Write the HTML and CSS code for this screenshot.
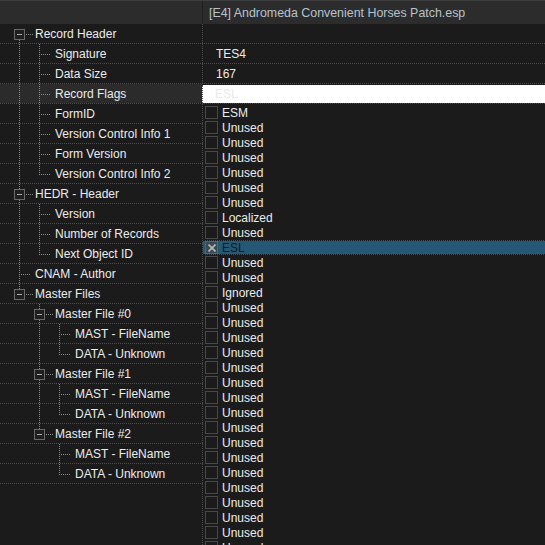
FILE: index.html
```html
<!DOCTYPE html>
<html>
<head>
<meta charset="utf-8">
<link rel="stylesheet" href="styles.css">
</head>
<body>
<div class="app">
  <div class="header">
    <div class="hcell hname"></div>
    <div class="hcell hval">[E4] Andromeda Convenient Horses Patch.esp</div>
  </div>
  <div class="rows">
    <div class="row"><div class="name"><span class="c box-first"><i class="box"></i></span><span class="t">Record Header</span></div><div class="val"></div></div>
    <div class="row"><div class="name"><span class="g pipe"></span><span class="c tee"></span><span class="t">Signature</span></div><div class="val">TES4</div></div>
    <div class="row"><div class="name"><span class="g pipe"></span><span class="c tee"></span><span class="t">Data Size</span></div><div class="val">167</div></div>
    <div class="row sel"><div class="name"><span class="g pipe"></span><span class="c tee"></span><span class="t">Record Flags</span></div><div class="val edit">ESL</div></div>
    <div class="row"><div class="name"><span class="g pipe"></span><span class="c tee"></span><span class="t">FormID</span></div><div class="val"></div></div>
    <div class="row"><div class="name"><span class="g pipe"></span><span class="c tee"></span><span class="t">Version Control Info 1</span></div><div class="val"></div></div>
    <div class="row"><div class="name"><span class="g pipe"></span><span class="c tee"></span><span class="t">Form Version</span></div><div class="val"></div></div>
    <div class="row"><div class="name"><span class="g pipe"></span><span class="c elbow"></span><span class="t">Version Control Info 2</span></div><div class="val"></div></div>
    <div class="row"><div class="name"><span class="c box-mid"><i class="box"></i></span><span class="t">HEDR - Header</span></div><div class="val"></div></div>
    <div class="row"><div class="name"><span class="g pipe"></span><span class="c tee"></span><span class="t">Version</span></div><div class="val"></div></div>
    <div class="row"><div class="name"><span class="g pipe"></span><span class="c tee"></span><span class="t">Number of Records</span></div><div class="val"></div></div>
    <div class="row"><div class="name"><span class="g pipe"></span><span class="c elbow"></span><span class="t">Next Object ID</span></div><div class="val"></div></div>
    <div class="row"><div class="name"><span class="c tee"></span><span class="t">CNAM - Author</span></div><div class="val"></div></div>
    <div class="row"><div class="name"><span class="c box-last"><i class="box"></i></span><span class="t">Master Files</span></div><div class="val"></div></div>
    <div class="row"><div class="name"><span class="g"></span><span class="c box-mid"><i class="box"></i></span><span class="t">Master File #0</span></div><div class="val"></div></div>
    <div class="row"><div class="name"><span class="g"></span><span class="g pipe"></span><span class="c tee"></span><span class="t">MAST - FileName</span></div><div class="val"></div></div>
    <div class="row"><div class="name"><span class="g"></span><span class="g pipe"></span><span class="c elbow"></span><span class="t">DATA - Unknown</span></div><div class="val"></div></div>
    <div class="row"><div class="name"><span class="g"></span><span class="c box-mid"><i class="box"></i></span><span class="t">Master File #1</span></div><div class="val"></div></div>
    <div class="row"><div class="name"><span class="g"></span><span class="g pipe"></span><span class="c tee"></span><span class="t">MAST - FileName</span></div><div class="val"></div></div>
    <div class="row"><div class="name"><span class="g"></span><span class="g pipe"></span><span class="c elbow"></span><span class="t">DATA - Unknown</span></div><div class="val"></div></div>
    <div class="row"><div class="name"><span class="g"></span><span class="c box-last"><i class="box"></i></span><span class="t">Master File #2</span></div><div class="val"></div></div>
    <div class="row"><div class="name"><span class="g"></span><span class="g"></span><span class="c tee"></span><span class="t">MAST - FileName</span></div><div class="val"></div></div>
    <div class="row"><div class="name"><span class="g"></span><span class="g"></span><span class="c elbow"></span><span class="t">DATA - Unknown</span></div><div class="val"></div></div>
    <div class="filler"><div class="fname"></div><div class="fval"></div></div>
  </div>

  <ul class="dropdown">
    <li><span class="cb"></span>ESM</li>
    <li><span class="cb"></span>Unused</li>
    <li><span class="cb"></span>Unused</li>
    <li><span class="cb"></span>Unused</li>
    <li><span class="cb"></span>Unused</li>
    <li><span class="cb"></span>Unused</li>
    <li><span class="cb"></span>Unused</li>
    <li><span class="cb"></span>Localized</li>
    <li><span class="cb"></span>Unused</li>
    <li class="on"><span class="cb"><svg width="8" height="8" viewBox="0 0 8 8"><path d="M0.5 0.5L7.5 7.5M7.5 0.5L0.5 7.5" stroke="#b8b8b8" stroke-width="1.6"/></svg></span>ESL</li>
    <li><span class="cb"></span>Unused</li>
    <li><span class="cb"></span>Unused</li>
    <li><span class="cb"></span>Ignored</li>
    <li><span class="cb"></span>Unused</li>
    <li><span class="cb"></span>Unused</li>
    <li><span class="cb"></span>Unused</li>
    <li><span class="cb"></span>Unused</li>
    <li><span class="cb"></span>Unused</li>
    <li><span class="cb"></span>Unused</li>
    <li><span class="cb"></span>Unused</li>
    <li><span class="cb"></span>Unused</li>
    <li><span class="cb"></span>Unused</li>
    <li><span class="cb"></span>Unused</li>
    <li><span class="cb"></span>Unused</li>
    <li><span class="cb"></span>Unused</li>
    <li><span class="cb"></span>Unused</li>
    <li><span class="cb"></span>Unused</li>
    <li><span class="cb"></span>Unused</li>
    <li><span class="cb"></span>Unused</li>
    <li><span class="cb"></span>Unused</li>
    <li><span class="cb"></span>Unused</li>
    <li><span class="cb"></span>Unused</li>
  </ul>
</div>
</body>
</html>
```

FILE: styles.css
```css
html, body {
  margin: 0;
  padding: 0;
  background: #1b1b1b;
  overflow: hidden;
}
body {
  font-family: "Liberation Sans", Arial, sans-serif;
  font-size: 12px;
  color: #ececec;
}
.app {
  position: relative;
  width: 545px;
  height: 545px;
  display: flex;
  flex-direction: column;
  overflow: hidden;
}
.header {
  display: flex;
  height: 23px;
  background: #2c2c2c;
  border-top: 1px solid #3e3e3e;
  flex: none;
}
.hcell {
  display: flex;
  align-items: center;
}
.hname {
  width: 202px;
  border-right: 1px solid #1f1f1f;
}
.hval {
  flex: 1;
  padding-left: 6px;
  font-size: 12.4px;
  color: #b7c3cc;
}
.rows {
  flex: 1;
  display: flex;
  flex-direction: column;
}
.row {
  display: flex;
  height: 19px;
  border-bottom: 1px dotted #4c4c4c;
}
.name {
  width: 193px;
  padding-left: 9px;
  display: flex;
  align-items: center;
  white-space: nowrap;
}
.row.sel .name {
  background: #2b2b2b;
}
.val {
  flex: 1;
  border-left: 1px dotted #4c4c4c;
  padding-left: 13px;
  padding-top: 1px;
  display: flex;
  align-items: center;
}
.val.edit {
  background: #ffffff;
  color: #e9e9e9;
  margin-top: 1px;
  padding-top: 0;
  padding-left: 12px;
}
.g {
  width: 20px;
  height: 19px;
  flex: none;
}
.c {
  width: 26px;
  height: 19px;
  flex: none;
  display: flex;
  align-items: flex-start;
}
.t {
  line-height: 19px;
  padding-top: 1px;
}
/* dotted tree lines via gradients */
.g.pipe {
  background-image: repeating-linear-gradient(to bottom, #8a8a8a 0 1px, transparent 1px 2px);
  background-size: 1px 19px;
  background-position: 10px 0;
  background-repeat: no-repeat;
}
.c.tee {
  background-image:
    repeating-linear-gradient(to bottom, #8a8a8a 0 1px, transparent 1px 2px),
    repeating-linear-gradient(to right, #8a8a8a 0 1px, transparent 1px 2px);
  background-size: 1px 19px, 12px 1px;
  background-position: 10px 0, 10px 10px;
  background-repeat: no-repeat;
}
.c.elbow {
  background-image:
    repeating-linear-gradient(to bottom, #8a8a8a 0 1px, transparent 1px 2px),
    repeating-linear-gradient(to right, #8a8a8a 0 1px, transparent 1px 2px);
  background-size: 1px 10px, 12px 1px;
  background-position: 10px 0, 10px 10px;
  background-repeat: no-repeat;
}
.c.box-first,
.c.box-mid,
.c.box-last {
  background-repeat: no-repeat;
}
.c.box-first {
  background-image:
    repeating-linear-gradient(to right, #8a8a8a 0 1px, transparent 1px 2px),
    repeating-linear-gradient(to bottom, #8a8a8a 0 1px, transparent 1px 2px);
  background-size: 8px 1px, 1px 3px;
  background-position: 17px 10px, 10px 16px;
}
.c.box-mid {
  background-image:
    repeating-linear-gradient(to right, #8a8a8a 0 1px, transparent 1px 2px),
    repeating-linear-gradient(to bottom, #8a8a8a 0 1px, transparent 1px 2px),
    repeating-linear-gradient(to bottom, #8a8a8a 0 1px, transparent 1px 2px);
  background-size: 8px 1px, 1px 5px, 1px 3px;
  background-position: 17px 10px, 10px 0, 10px 16px;
}
.c.box-last {
  background-image:
    repeating-linear-gradient(to right, #8a8a8a 0 1px, transparent 1px 2px),
    repeating-linear-gradient(to bottom, #8a8a8a 0 1px, transparent 1px 2px);
  background-size: 8px 1px, 1px 5px;
  background-position: 17px 10px, 10px 0;
}
.box {
  display: flex;
  align-items: center;
  justify-content: center;
  box-sizing: border-box;
  width: 11px;
  height: 11px;
  margin: 5px 0 0 5px;
  border: 1px solid #6a6a6a;
  background: #1f1f1f;
}
.box::before {
  content: "";
  width: 5px;
  height: 1px;
  background: #b0b0b0;
}
.filler {
  flex: 1;
  display: flex;
}
.fname {
  width: 202px;
}
.fval {
  flex: 1;
  border-left: 1px dotted #4c4c4c;
}
/* popup flags list */
.dropdown {
  position: absolute;
  top: 105px;
  left: 203px;
  right: 0;
  bottom: 0;
  margin: 0;
  padding: 0;
  list-style: none;
  background: #1b1b1b;
  overflow: hidden;
}
.dropdown li {
  height: 15px;
  display: flex;
  align-items: center;
  padding-left: 2px;
  box-sizing: border-box;
}
.cb {
  width: 13px;
  height: 13px;
  box-sizing: border-box;
  border: 1px solid #484848;
  margin-right: 4px;
  flex: none;
  display: flex;
  align-items: center;
  justify-content: center;
}
.dropdown li.on {
  background: #245874;
  color: #0d1c27;
  border-top: 1px dotted #101820;
  border-bottom: 1px dotted #101820;
}
.dropdown li.on .cb {
  background: #3a4a52;
  border-color: #56656c;
}
```
